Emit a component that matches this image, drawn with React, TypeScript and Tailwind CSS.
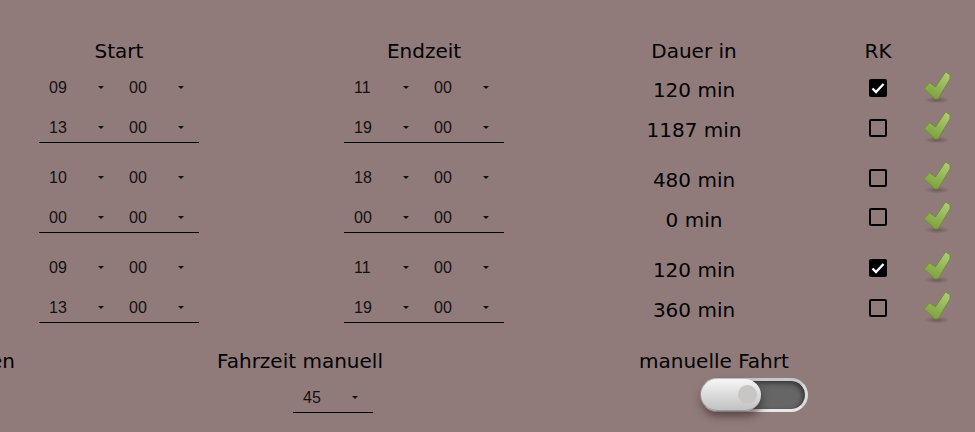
const sans = "font-['DejaVu_Sans',Verdana,sans-serif] text-[20px] text-black"

const groups = [
  [
    { start: ["09", "00"], end: ["11", "00"], minutes: "120 min", rk: true },
    { start: ["13", "00"], end: ["19", "00"], minutes: "1187 min", rk: false },
  ],
  [
    { start: ["10", "00"], end: ["18", "00"], minutes: "480 min", rk: false },
    { start: ["00", "00"], end: ["00", "00"], minutes: "0 min", rk: false },
  ],
  [
    { start: ["09", "00"], end: ["11", "00"], minutes: "120 min", rk: true },
    { start: ["13", "00"], end: ["19", "00"], minutes: "360 min", rk: false },
  ],
]

function Select({ value }: { value: string }) {
  return (
    <div className="flex h-10 w-20 shrink-0 items-center pl-[10px] pt-[2px] font-['Liberation_Sans',Arial,sans-serif] text-[16px] text-[#111]">
      <span className="w-[49px]">{value}</span>
      <span className="-mt-[2px] h-0 w-0 border-x-[3px] border-t-[3px] border-x-transparent border-t-[#111]" />
    </div>
  )
}

function TimePair({ values, underline }: { values: string[]; underline: boolean }) {
  return (
    <div className={underline ? "flex h-9 w-40 border-b border-black" : "flex h-10 w-40"}>
      <Select value={values[0]} />
      <Select value={values[1]} />
    </div>
  )
}

function Checkbox({ checked, raised }: { checked: boolean; raised: boolean }) {
  return (
    <div className={`${raised ? "mt-0" : "mt-[2px]"} flex h-[18px] w-[18px] items-center justify-center rounded-[2px] border-2 border-black ${checked ? "bg-black" : ""}`}>
      {checked && (
        <svg width="14" height="14" viewBox="0 0 14 14" fill="none">
          <path d="M1.500 7.500 L5 11 L12.500 3" stroke="#fff" strokeWidth="2.4" />
        </svg>
      )}
    </div>
  )
}

function GreenCheck() {
  return (
    <svg width="30" height="36" viewBox="0 0 30 36" className="mt-[4px] shrink-0">
      <defs>
        <linearGradient id="g" x1="0.8" y1="0" x2="0.3" y2="1">
          <stop offset="0" stopColor="#aecb76" />
          <stop offset="1" stopColor="#7ba03d" />
        </linearGradient>
        <radialGradient id="s">
          <stop offset="0" stopColor="#5a4a4a" stopOpacity="0.7" />
          <stop offset="1" stopColor="#5a4a4a" stopOpacity="0" />
        </radialGradient>
      </defs>
      <ellipse cx="14" cy="29" rx="13" ry="3.500" fill="url(#s)" />
      <path
        d="M1 17.700 L6.600 11.700 L12.400 16 L22.500 1 L27 3.700 L27 8 L15 28 L12 28 Z"
        fill="url(#g)"
        stroke="#6a8c32"
        strokeWidth="0.9"
        strokeLinejoin="round"
      />
    </svg>
  )
}

function Toggle() {
  return (
    <div className="relative h-[34px] w-[108px] rounded-full border-[3px] border-t-[#c8c8c8] border-r-[#dcdcdc] border-b-[#e8e8e8] border-l-[#aaa] bg-[#666] shadow-[inset_-2px_2px_5px_#333]">
      <div className="absolute -left-[2px] -top-[2px] flex h-[32px] w-[60px] items-center justify-end rounded-full border-b border-[#999] bg-gradient-to-b from-[#f6f6f6] to-[#c2c2c2] pr-[4px] shadow-[1px_5px_8px_rgba(50,35,35,0.65)]">
        <div className="h-[19px] w-[19px] rounded-full bg-[#c8c6c5]" />
      </div>
    </div>
  )
}

export default function App() {
  return (
    <div className="h-[432px] w-[975px] overflow-hidden bg-[#917b7a] pt-[35px]">
      {/* Header */}
      <div className={`flex h-[32px] items-center pl-[39px] ${sans}`}>
        <div className="w-40 text-center">Start</div>
        <div className="ml-[145px] w-40 text-center">Endzeit</div>
        <div className="ml-[110px] w-40 text-center">Dauer in</div>
        <div className="ml-[84px] w-10 text-center">RK</div>
      </div>

      {/* Time rows */}
      {groups.map((rows, g) => (
        <div key={g} className="mb-[10px]">
          {rows.map((row, i) => (
            <div key={i} className="flex h-10 items-start pl-[39px]">
              <TimePair values={row.start} underline={i === 1} />
              <div className="ml-[145px]">
                <TimePair values={row.end} underline={i === 1} />
              </div>
              <div className={`ml-[110px] flex h-10 w-40 items-center justify-center pt-[6px] ${sans}`}>
                {row.minutes}
              </div>
              <div className="ml-[84px] flex h-10 w-10 items-center justify-center">
                <Checkbox checked={row.rk} raised={g === 1 && i === 1} />
              </div>
              <div className="ml-[25px]">
                <GreenCheck />
              </div>
            </div>
          ))}
        </div>
      ))}

      {/* Bottom */}
      <div className={`mt-[19px] flex ${sans}`}>
        <div className="flex h-[32px] w-[15px] items-center justify-end pb-[2px]">en</div>
        <div className="ml-[185px] w-[200px]">
          <div className="flex h-[32px] items-center justify-center whitespace-nowrap pb-[2px]">Fahrzeit manuell</div>
          <div className="ml-[93px] flex h-[35px] w-20 items-start border-b border-black">
            <div className="-mt-px">
              <Select value="45" />
            </div>
          </div>
        </div>
        <div className="ml-[239px] w-[150px]">
          <div className="flex h-[32px] items-center whitespace-nowrap pb-[2px]">manuelle Fahrt</div>
          <div className="ml-[61px]">
            <Toggle />
          </div>
        </div>
      </div>
    </div>
  )
}
